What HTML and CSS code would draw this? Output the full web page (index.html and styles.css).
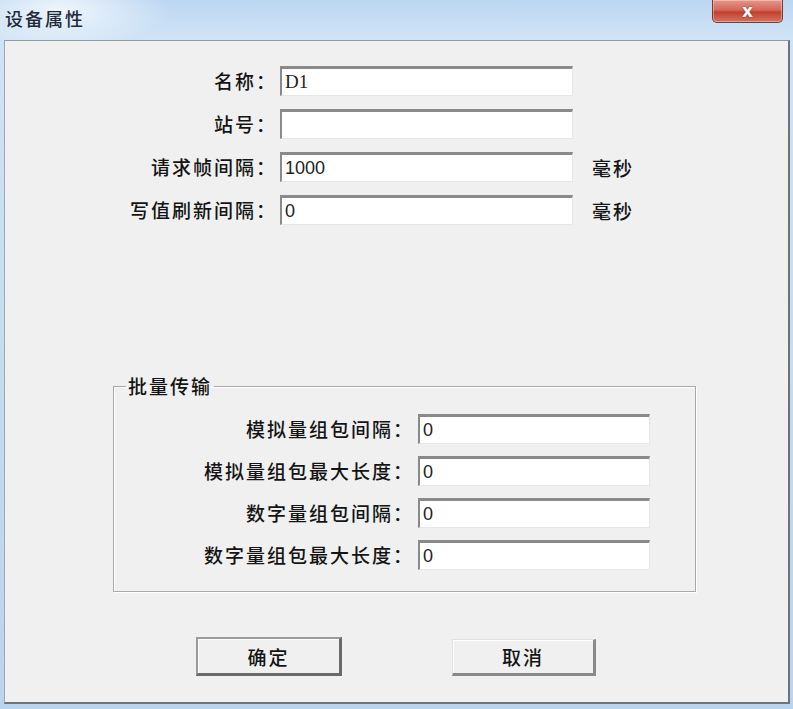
FILE: index.html
```html
<!doctype html>
<html lang="zh-CN">
    <head>
        <meta charset="UTF-8" />
        <title>设备属性</title>
        <link rel="stylesheet" href="styles.css">
    </head>
    <body>
        <div class="window">
            <div class="titlebar">
                <span class="title">设备属性</span>
                <button class="close" type="button">x</button>
            </div>

            <div class="client">
                <div class="fields">
                    <label class="label" for="name">名称：</label>
                    <input class="field field-serif" id="name" type="text" value="D1" />
                    <span></span>

                    <label class="label" for="station">站号：</label>
                    <input class="field" id="station" type="text" value="" />
                    <span></span>

                    <label class="label" for="frame">请求帧间隔：</label>
                    <input class="field" id="frame" type="text" value="1000" />
                    <span class="unit">毫秒</span>

                    <label class="label" for="refresh">写值刷新间隔：</label>
                    <input class="field" id="refresh" type="text" value="0" />
                    <span class="unit">毫秒</span>
                </div>

                <fieldset class="group">
                    <legend class="group-title">批量传输</legend>
                    <div class="group-fields">
                        <label class="label" for="a-gap">模拟量组包间隔：</label>
                        <input class="field" id="a-gap" type="text" value="0" />

                        <label class="label" for="a-max">模拟量组包最大长度：</label>
                        <input class="field" id="a-max" type="text" value="0" />

                        <label class="label" for="d-gap">数字量组包间隔：</label>
                        <input class="field" id="d-gap" type="text" value="0" />

                        <label class="label" for="d-max">数字量组包最大长度：</label>
                        <input class="field" id="d-max" type="text" value="0" />
                    </div>
                </fieldset>

                <div class="buttons">
                    <button class="btn btn-default" type="button">确定</button>
                    <button class="btn" type="button">取消</button>
                </div>
            </div>
        </div>
    </body>
</html>
```

FILE: styles.css
```css
:root {
    --face-color: #f0f0f0;
    --text-color: #141414;
    --cjk-font: "Noto Sans CJK SC", "Liberation Sans", sans-serif;
}

* {
    box-sizing: border-box;
}

body {
    margin: 0;
    font-family: var(--cjk-font);
    color: var(--text-color);
}

.window {
    width: 793px;
    height: 709px;
    display: flex;
    flex-direction: column;
    background:
        radial-gradient(ellipse 110px 40px at 60px 10px, rgba(255, 255, 255, 0.75), rgba(255, 255, 255, 0)),
        linear-gradient(to bottom, #bcd7f1 0, #cfe3f6 38px, #b9d4ee 100%);
    overflow: hidden;
}

/* title bar */
.titlebar {
    height: 40px;
    display: flex;
    justify-content: space-between;
    align-items: flex-start;
    flex-shrink: 0;
}

.title {
    padding: 6px 0 0 5px;
    font-size: 18px;
    font-weight: 500;
    letter-spacing: 2px;
    line-height: 24px;
    color: #1f2b3b;
}

.close {
    width: 71px;
    height: 23px;
    margin-right: 10px;
    border: 1px solid #7a3a33;
    border-top: none;
    border-radius: 0 0 5px 5px;
    background: linear-gradient(to bottom, #e3978a 0, #d5685a 45%, #c2402f 55%, #d9715f 100%);
    box-shadow: inset 0 0 0 1px rgba(255, 255, 255, 0.35);
    color: #fff;
    font-family: "DejaVu Sans", sans-serif;
    font-size: 17px;
    font-weight: 700;
    line-height: 18px;
    padding: 0;
    text-shadow: 0 0 2px #7a2b22;
}

/* dialog client area */
.client {
    flex: 1;
    margin: 0 3px 5px 4px;
    background-color: var(--face-color);
    border-top: 1px solid #8d9aaa;
    border-left: 1px solid #9aa7b6;
    border-right: 2px solid #6e7378;
    border-bottom: 2px solid #6e7378;
}

.fields {
    display: grid;
    grid-template-columns: 272px 293px auto;
    grid-auto-rows: 30px;
    column-gap: 3px;
    row-gap: 13px;
    padding-top: 25px;
    align-items: center;
}

.label {
    text-align: right;
    font-size: 19px;
    font-weight: 500;
    letter-spacing: 2px;
    line-height: 30px;
    white-space: nowrap;
}

.field {
    height: 30px;
    width: 100%;
    margin: 0;
    padding: 0 0 0 3px;
    background: #fff;
    border-top: 3px solid #8a8a8a;
    border-left: 2px solid #8a8a8a;
    border-right: 1px solid #e6e6e6;
    border-bottom: 1px solid #e6e6e6;
    font-family: "Liberation Sans", sans-serif;
    font-size: 18px;
    color: #222;
    outline: none;
}

.field-serif {
    font-family: "Liberation Serif", serif;
    font-size: 19px;
}

.unit {
    margin-left: 16px;
    font-size: 19px;
    font-weight: 500;
    letter-spacing: 2px;
}

/* 批量传输 group */
.group {
    margin: 150px 0 0 108px;
    width: 583px;
    height: 217px;
    padding: 0;
    border: 1px solid #a9a9a9;
    box-shadow: inset 1px 1px 0 #fff, 1px 1px 0 #fff;
}

.group-title {
    margin-left: 12px;
    padding: 0 2px;
    font-size: 19px;
    font-weight: 500;
    letter-spacing: 2px;
    line-height: 22px;
}

.group-fields {
    display: grid;
    grid-template-columns: 300px 232px;
    grid-auto-rows: 30px;
    column-gap: 4px;
    row-gap: 12px;
    padding-top: 17px;
    align-items: center;
}

/* buttons */
.buttons {
    display: flex;
    align-items: flex-end;
    gap: 110px;
    padding-left: 191px;
    margin-top: 45px;
}

.btn {
    width: 144px;
    height: 37px;
    padding: 0;
    background: var(--face-color);
    border-top: 1px solid #e0e0e0;
    border-left: 1px solid #e0e0e0;
    border-right: 3px solid #8a8a8a;
    border-bottom: 3px solid #8a8a8a;
    box-shadow: inset 1px 1px 0 #fff;
    font-family: var(--cjk-font);
    font-size: 19px;
    font-weight: 500;
    letter-spacing: 2px;
    color: var(--text-color);
}

.btn-default {
    width: 146px;
    height: 39px;
    border-top: 2px solid #9a9a9a;
    border-left: 2px solid #9a9a9a;
    border-right: 3px solid #6a6a6a;
    border-bottom: 3px solid #6a6a6a;
}
```
